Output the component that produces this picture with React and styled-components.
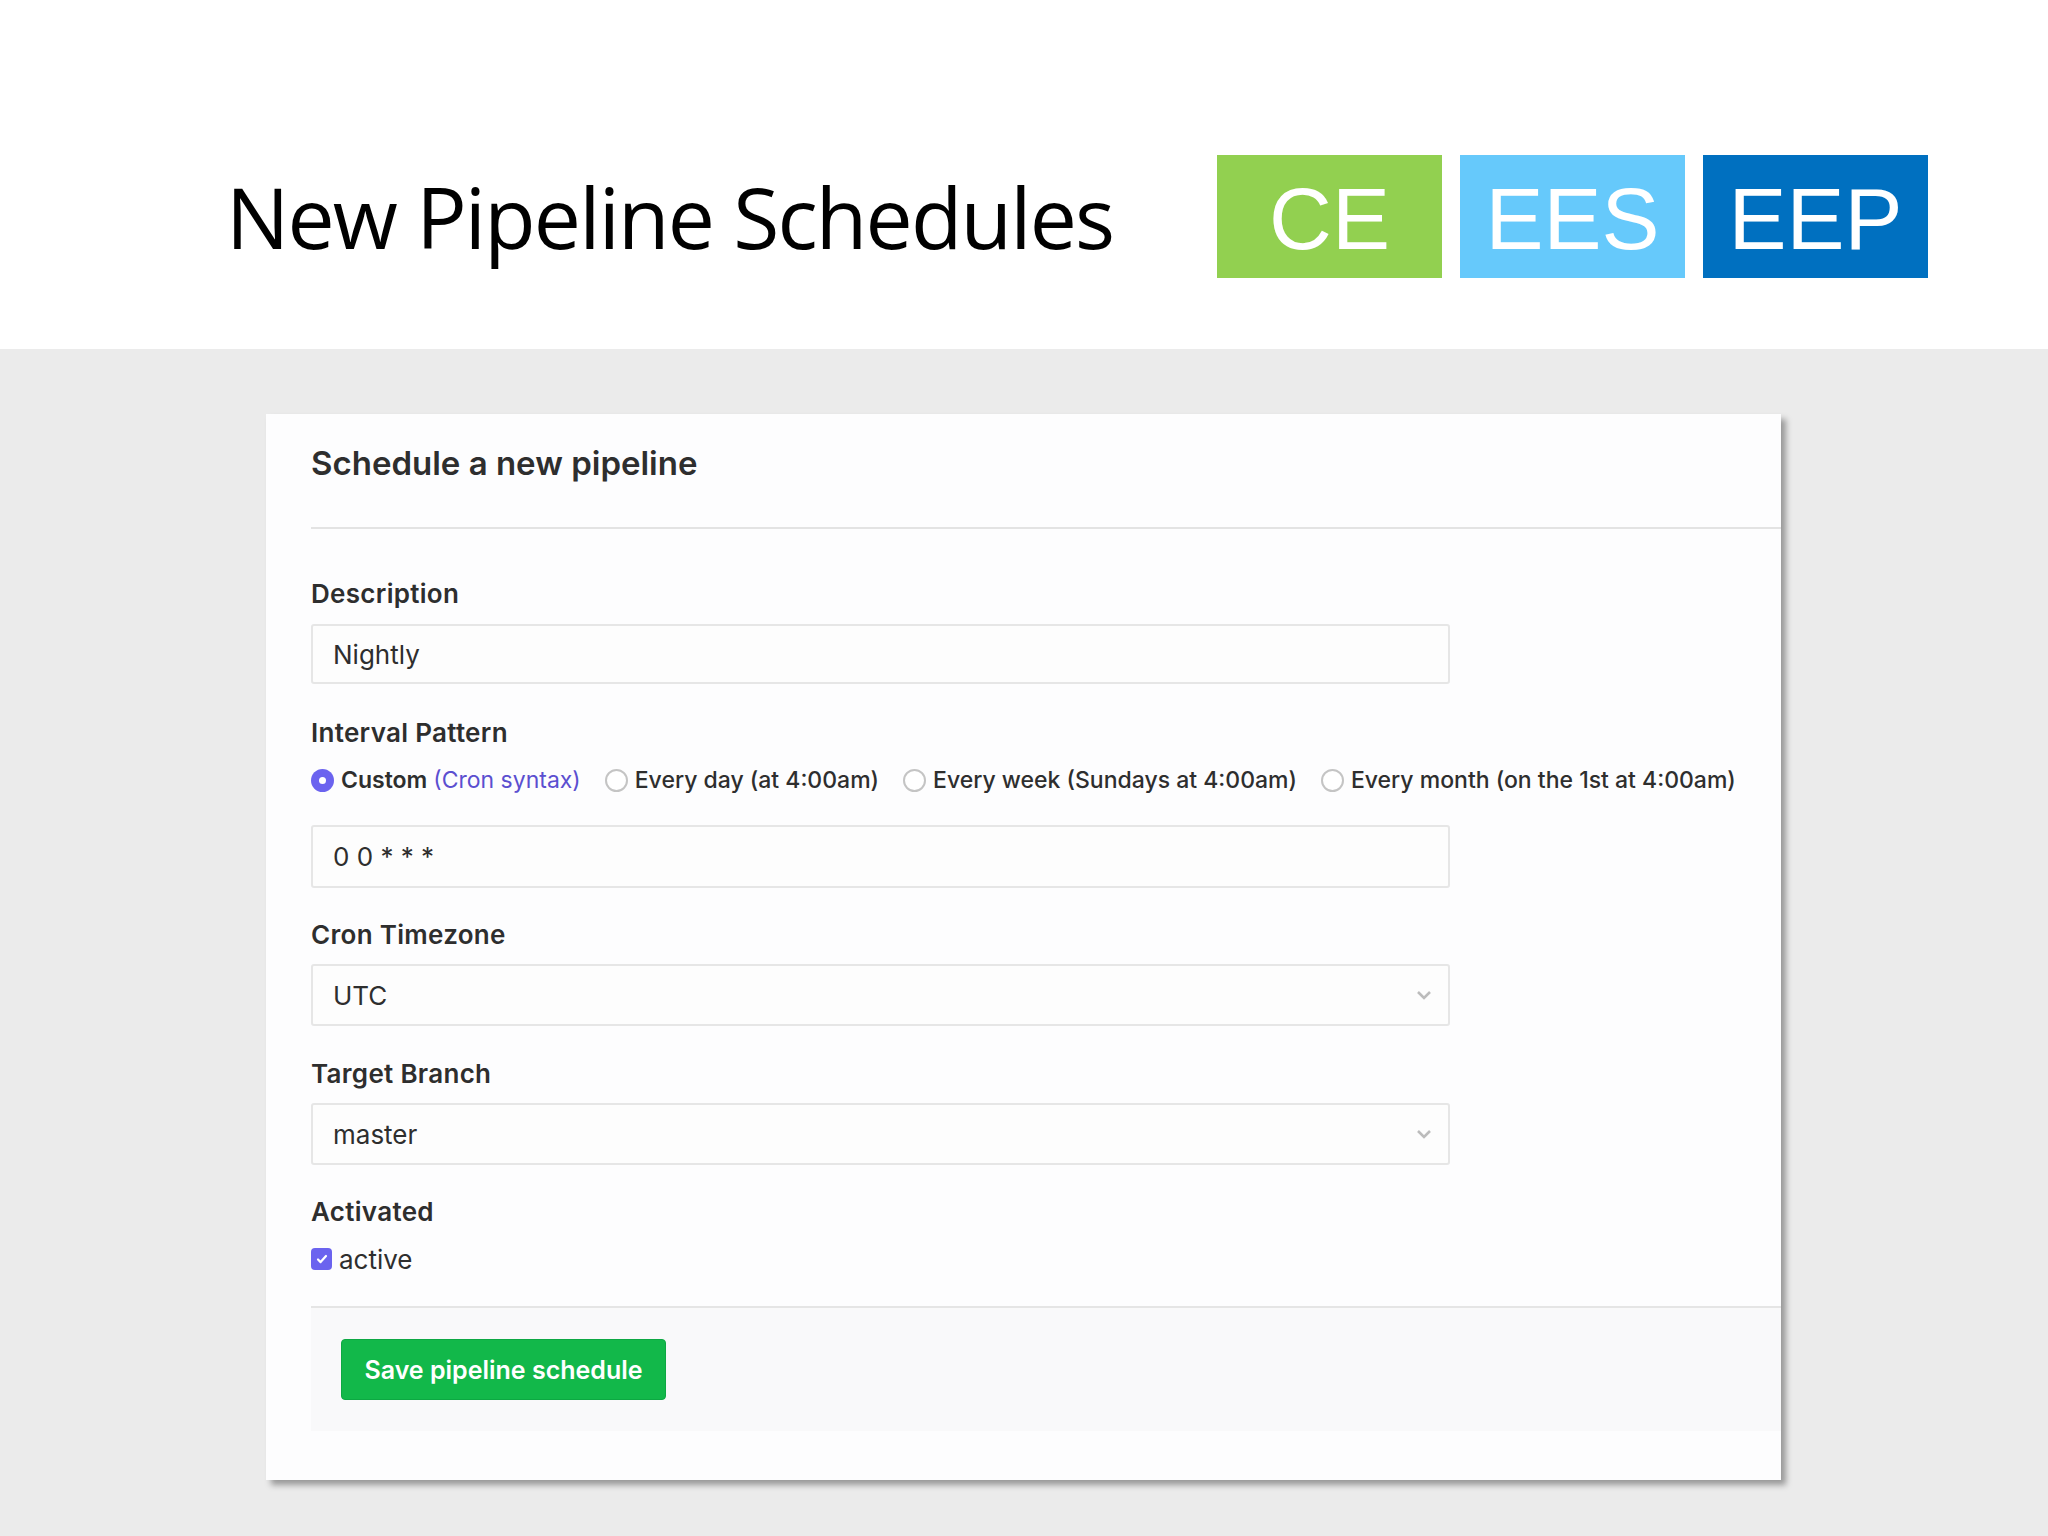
import React from "react"
import styled, { createGlobalStyle } from "styled-components"

const GlobalStyle = createGlobalStyle`
  html, body {
    margin: 0;
    padding: 0;
    background: #ebebeb;
  }
  body {
    font-family: "Inter", "Roboto", sans-serif;
    color: #2e2e2e;
  }
`

const Page = styled.div`
  width: 2048px;
  height: 1536px;
  display: flex;
  flex-direction: column;
  background: #ebebeb;
  overflow: hidden;
`

const Header = styled.header`
  height: 349px;
  box-sizing: border-box;
  background: #ffffff;
  display: flex;
  align-items: flex-start;
  padding: 155px 0 0 226px;
`

const Title = styled.h1`
  margin: 0;
  height: 123px;
  width: 991px;
  display: flex;
  align-items: center;
  font-family: "Open Sans", "Noto Sans", sans-serif;
  font-weight: 400;
  font-size: 84px;
  letter-spacing: -1.8px;
  color: #000;
`

const Badges = styled.div`
  display: flex;
  gap: 18px;
`

const Badge = styled.div`
  width: 225px;
  height: 123px;
  background: ${({ bg }) => bg};
  color: #fff;
  display: flex;
  align-items: center;
  justify-content: center;
  font-family: "Liberation Sans", Arial, sans-serif;
  font-size: 87px;
  line-height: 1;
  padding-top: 4px;
  box-sizing: border-box;
`

const Main = styled.main`
  flex: 1;
  padding: 65px 0 0 266px;
`

const Card = styled.section`
  width: 1515px;
  height: 1066px;
  box-sizing: border-box;
  background: #fdfdfe;
  padding-left: 45px;
  box-shadow: 5px 5px 6px rgba(0, 0, 0, 0.35);
`

const CardHead = styled.div`
  height: 115px;
  box-sizing: border-box;
  border-bottom: 2px solid #e3e3e3;
  display: flex;
  align-items: flex-start;
  padding-top: 26px;
`

const CardTitle = styled.h2`
  margin: 0;
  font-size: 33px;
  line-height: 46px;
  font-weight: 600;
  color: #2e2e2e;
`

const Body = styled.div`
  padding-top: 48px;
  display: flex;
  flex-direction: column;
`

const Label = styled.div`
  font-size: 26px;
  line-height: 34px;
  font-weight: 600;
  letter-spacing: 0.3px;
  color: #2e2e2e;
  margin-top: ${({ top }) => top || 0}px;
  margin-bottom: ${({ gap }) => gap || 13}px;
`

const Field = styled.div`
  width: 1139px;
  height: ${({ h }) => h || 60}px;
  box-sizing: border-box;
  border: 2px solid #e6e6e6;
  border-radius: 3px;
  background: #fdfdfd;
  display: flex;
  align-items: center;
  justify-content: space-between;
  padding: 0 16px 0 20px;
  font-size: 26px;
  color: #2e2e2e;
`

const Chevron = () => (
  <svg width="16" height="10" viewBox="0 0 16 10">
    <path d="M2 2l6 6 6-6" fill="none" stroke="#bcbcbc" strokeWidth="2.6" />
  </svg>
)

const RadioRow = styled.div`
  display: flex;
  align-items: center;
  height: 30px;
  margin-bottom: 30px;
  font-size: 23px;
  font-weight: 500;
  color: #2e2e2e;
`

const RadioItem = styled.label`
  display: flex;
  align-items: center;
  gap: 7px;
  margin-right: 24px;
  white-space: nowrap;
`

const RadioDot = styled.span`
  width: 23px;
  height: 23px;
  border-radius: 50%;
  box-sizing: border-box;
  display: flex;
  align-items: center;
  justify-content: center;
  background: ${({ on }) => (on ? "#6b63ef" : "#fff")};
  border: ${({ on }) => (on ? "none" : "2px solid #c4c4c4")};
  &::after {
    content: "";
    width: 7px;
    height: 7px;
    border-radius: 50%;
    background: #fff;
    display: ${({ on }) => (on ? "block" : "none")};
  }
`

const Strong = styled.span`
  font-weight: 600;
`

const Link = styled.span`
  color: #5b4fd0;
  font-weight: 400;
  margin-left: 6px;
`

const CheckRow = styled.label`
  display: flex;
  align-items: center;
  gap: 7px;
  height: 30px;
  font-size: 26px;
  color: #2e2e2e;
`

const CheckBox = styled.span`
  width: 21px;
  height: 22px;
  border-radius: 4px;
  background: #6b63ef;
  display: flex;
  align-items: center;
  justify-content: center;
`

const Footer = styled.div`
  margin-top: 32px;
  border-top: 2px solid #e5e5e5;
  background: #f9f9fa;
  height: 125px;
  box-sizing: border-box;
  padding: 31px 0 0 30px;
`

const SaveButton = styled.button`
  width: 325px;
  height: 61px;
  border: 1px solid #0da843;
  border-radius: 4px;
  background: #12b84a;
  color: #fff;
  font-family: "Inter", "Roboto", sans-serif;
  font-size: 25px;
  font-weight: 600;
  cursor: pointer;
`

const options = [
  { id: "day", text: "Every day (at 4:00am)" },
  { id: "week", text: "Every week (Sundays at 4:00am)" },
  { id: "month", text: "Every month (on the 1st at 4:00am)" },
]

export default function App() {
  return (
    <Page>
      <GlobalStyle />
      <Header>
        <Title>New Pipeline Schedules</Title>
        <Badges>
          <Badge bg="#92d050">CE</Badge>
          <Badge bg="#66c9fb">EES</Badge>
          <Badge bg="#0070c0">EEP</Badge>
        </Badges>
      </Header>
      <Main>
        <Card>
          <CardHead>
            <CardTitle>Schedule a new pipeline</CardTitle>
          </CardHead>
          <Body>
            <Label>Description</Label>
            <Field>Nightly</Field>

            <Label top={32} gap={15}>Interval Pattern</Label>
            <RadioRow>
              <RadioItem>
                <RadioDot on />
                <span>
                  <Strong>Custom</Strong>
                  <Link>(Cron syntax)</Link>
                </span>
              </RadioItem>
              {options.map(o => (
                <RadioItem key={o.id}>
                  <RadioDot />
                  <span>{o.text}</span>
                </RadioItem>
              ))}
            </RadioRow>
            <Field h={63}>0 0 * * *</Field>

            <Label top={30} gap={12}>Cron Timezone</Label>
            <Field h={62}>
              <span>UTC</span>
              <Chevron />
            </Field>

            <Label top={31} gap={12}>Target Branch</Label>
            <Field h={62}>
              <span>master</span>
              <Chevron />
            </Field>

            <Label top={30} gap={15}>Activated</Label>
            <CheckRow>
              <CheckBox>
                <svg width="14" height="14" viewBox="0 0 14 14">
                  <path d="M3 7.5l2.6 2.6L11 4" fill="none" stroke="#fff" strokeWidth="2.2" strokeLinecap="round" strokeLinejoin="round" />
                </svg>
              </CheckBox>
              active
            </CheckRow>
          </Body>
          <Footer>
            <SaveButton>Save pipeline schedule</SaveButton>
          </Footer>
        </Card>
      </Main>
    </Page>
  )
}
